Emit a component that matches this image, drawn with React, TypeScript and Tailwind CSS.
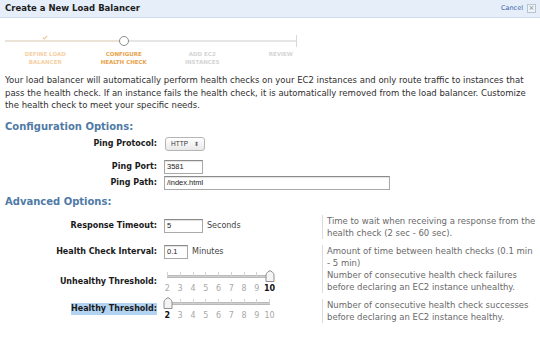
import React from 'react';

const steps = [
  { l1: 'DEFINE LOAD', l2: 'BALANCER', state: 'done' },
  { l1: 'CONFIGURE', l2: 'HEALTH CHECK', state: 'current' },
  { l1: 'ADD EC2', l2: 'INSTANCES', state: 'todo' },
  { l1: 'REVIEW', l2: '', state: 'todo' },
];

const nums = [2, 3, 4, 5, 6, 7, 8, 9, 10];

function Handle() {
  return (
    <svg width="10" height="12" viewBox="0 0 10 12" className="block">
      <path d="M1 11.5 V5 Q1 3.5 2.5 2.2 L5 0.6 L7.5 2.2 Q9 3.5 9 5 V11.5 Z" fill="#f4f4f4" stroke="#8f8f8f" strokeWidth="1" />
    </svg>
  );
}

function Slider({ value }: { value: number }) {
  const idx = nums.indexOf(value);
  return (
    <div className="flex flex-col w-[115px]">
      <div className="relative h-[14px]">
        <div className="absolute left-[6px] right-[6px] top-[6px] h-[3px] bg-[#cfcfcf] border-y border-[#b9b9b9]" />
        {nums.map((n, i) => (
          <div key={n} className="absolute top-[3px] w-px h-[4px] bg-[#d2d2d2]" style={{ left: 6 + i * 12.75 }} />
        ))}
        <div className="absolute top-[1px]" style={{ left: 1.5 + idx * 12.75 }}>
          <Handle />
        </div>
      </div>
      <div className="grid grid-cols-9 h-[13px] items-center">
        {nums.map((n) => (
          <span key={n} className={'text-center text-[8px] leading-none ' + (n === value ? 'font-bold text-[#111]' : 'text-[#a8a8a8]')}>
            {n}
          </span>
        ))}
      </div>
    </div>
  );
}

function Label({ children, hl }: { children: React.ReactNode; hl?: boolean }) {
  return (
    <div className="w-[157px] shrink-0 flex justify-end">
      <span className={'text-[8px] font-bold text-[#1a1a1a] leading-[12px] ' + (hl ? 'bg-[#b3d3f2]' : '')}>{children}</span>
    </div>
  );
}

function Input({ w, value }: { w: string; value: string }) {
  return (
    <div className={w + ' h-[14px] border border-[#a9a9a9] border-t-[#8a8a8a] bg-white shadow-[inset_0_1px_1px_rgba(0,0,0,0.12)] flex items-center px-[2px] text-[7.5px] text-[#222] font-["Liberation_Sans",Arial,sans-serif]'}>
      {value}
    </div>
  );
}

function Help({ children, mt }: { children: React.ReactNode; mt: string }) {
  return (
    <div className={mt + ' w-[216px] border-l border-[#dcdcdc] pl-[4px] text-[8.5px] leading-[12px] text-[#6a6a6a]'}>
      {children}
    </div>
  );
}

export default function App() {
  return (
    <div className="w-[540px] h-[337px] bg-white overflow-hidden font-['DejaVu_Sans',Verdana,sans-serif] text-[#333]">
      <div className="h-[18px] bg-[#e5eef9] border-b border-[#cfdcec] flex items-center justify-between pl-[5px] pr-[4px]">
        <span className="text-[8.5px] font-bold text-[#1d1d1d] leading-none">Create a New Load Balancer</span>
        <div className="flex items-center gap-[4px]">
          <span className="text-[6.5px] text-[#3a66a8]">Cancel</span>
          <span className="w-[9px] h-[9px] border border-[#b8c4d2] bg-[#eef3f9] flex items-center justify-center text-[7px] leading-none text-[#7b8797]">×</span>
        </div>
      </div>

      <div className="pt-[14px] pl-[5px]">
        <div className="relative w-[292px]">
          <div className="absolute left-0 w-[119px] top-[8px] h-[2px] bg-[#ebe3d6]" />
          <div className="absolute left-[119px] right-[1px] top-[8px] h-[2px] bg-[#e6e6e6]" />
          <div className="absolute right-0 top-[3px] w-px h-[12px] bg-[#d8d8d8]" />
          <div className="relative flex pl-px">
            {steps.map((s) => (
              <div key={s.l1} className="w-[78.5px] shrink-0 flex flex-col items-center">
                <div className="h-[18px] w-full flex items-center justify-center">
                  {s.state === 'done' && (
                    <svg width="6" height="5" viewBox="0 0 6 5" className="-mt-[8px]">
                      <path d="M0.8 2.6 L2.3 4 L5.2 0.8" fill="none" stroke="#f0c48e" strokeWidth="1.1" />
                    </svg>
                  )}
                  {s.state === 'current' && <span className="w-[10px] h-[10px] rounded-full bg-white border border-[#8c8c8c]" />}
                </div>
                <div
                  className={
                    'text-[5.5px] leading-[8px] text-center font-bold ' +
                    (s.state === 'current' ? 'text-[#e9a24a]' : s.state === 'done' ? 'text-[#f6cfa3]' : 'text-[#d4d4d4]')
                  }
                >
                  {s.l1}
                  <br />
                  {s.l2}
                </div>
              </div>
            ))}
          </div>
        </div>
      </div>

      <p className="mt-[8px] px-[5px] text-[8.5px] leading-[12.5px] text-[#2f2f2f]">
        Your load balancer will automatically perform health checks on your EC2 instances and only route traffic to instances that pass the health check. If an instance fails the health check, it is automatically removed from the load balancer. Customize the health check to meet your specific needs.
      </p>

      <h2 className="mt-[8px] pl-[5px] text-[10px] font-bold leading-[14px] text-[#4f7aa6]">Configuration Options:</h2>

      <div className="mt-[2px] flex items-center h-[16px]">
        <Label>Ping Protocol:</Label>
        <div className="ml-[8px] w-[40px] h-[14px] rounded-[3px] border border-[#b5b5b5] bg-gradient-to-b from-white to-[#e9e9e9] flex items-center justify-between px-[5px] font-['Liberation_Sans',Arial,sans-serif]">
          <span className="text-[6.5px] text-[#333]">HTTP</span>
          <span className="text-[6px] text-[#666] leading-none">⬍</span>
        </div>
      </div>
      <div className="mt-[7px] flex items-center h-[16px]">
        <Label>Ping Port:</Label>
        <div className="ml-[7px]"><Input w="w-[39px]" value="3581" /></div>
      </div>
      <div className="mt-0 flex items-center h-[16px]">
        <Label>Ping Path:</Label>
        <div className="ml-[7px]"><Input w="w-[226px]" value="/index.html" /></div>
      </div>

      <h2 className="mt-[4px] pl-[5px] text-[10px] font-bold leading-[14px] text-[#4f7aa6]">Advanced Options:</h2>

      <div className="mt-[5px] flex items-start">
        <div className="w-[322px] shrink-0 flex items-center h-[24px] pt-px">
          <Label>Response Timeout:</Label>
          <div className="ml-[7px]"><Input w="w-[39px]" value="5" /></div>
          <span className="ml-[4px] text-[8px] text-[#444]">Seconds</span>
        </div>
        <Help mt="mt-[1px]">Time to wait when receiving a response from the health check (2 sec - 60 sec).</Help>
      </div>

      <div className="mt-[3px] flex items-start">
        <div className="w-[322px] shrink-0 flex items-center h-[20px]">
          <Label>Health Check Interval:</Label>
          <div className="ml-[7px]"><Input w="w-[24px]" value="0.1" /></div>
          <span className="ml-[4px] text-[8px] text-[#444]">Minutes</span>
        </div>
        <Help mt="mt-[3px]">Amount of time between health checks (0.1 min - 5 min)</Help>
      </div>

      <div className="mt-0 flex items-start">
        <div className="w-[322px] shrink-0 flex items-center">
          <Label>Unhealthy Threshold:</Label>
          <div className="ml-[4px]"><Slider value={10} /></div>
        </div>
        <Help mt="mt-0">Number of consecutive health check failures before declaring an EC2 instance unhealthy.</Help>
      </div>

      <div className="mt-0 flex items-start">
        <div className="w-[322px] shrink-0 flex items-center">
          <Label hl>Healthy Threshold:</Label>
          <div className="ml-[4px]"><Slider value={2} /></div>
        </div>
        <Help mt="mt-[3px]">Number of consecutive health check successes before declaring an EC2 instance healthy.</Help>
      </div>
    </div>
  );
}
